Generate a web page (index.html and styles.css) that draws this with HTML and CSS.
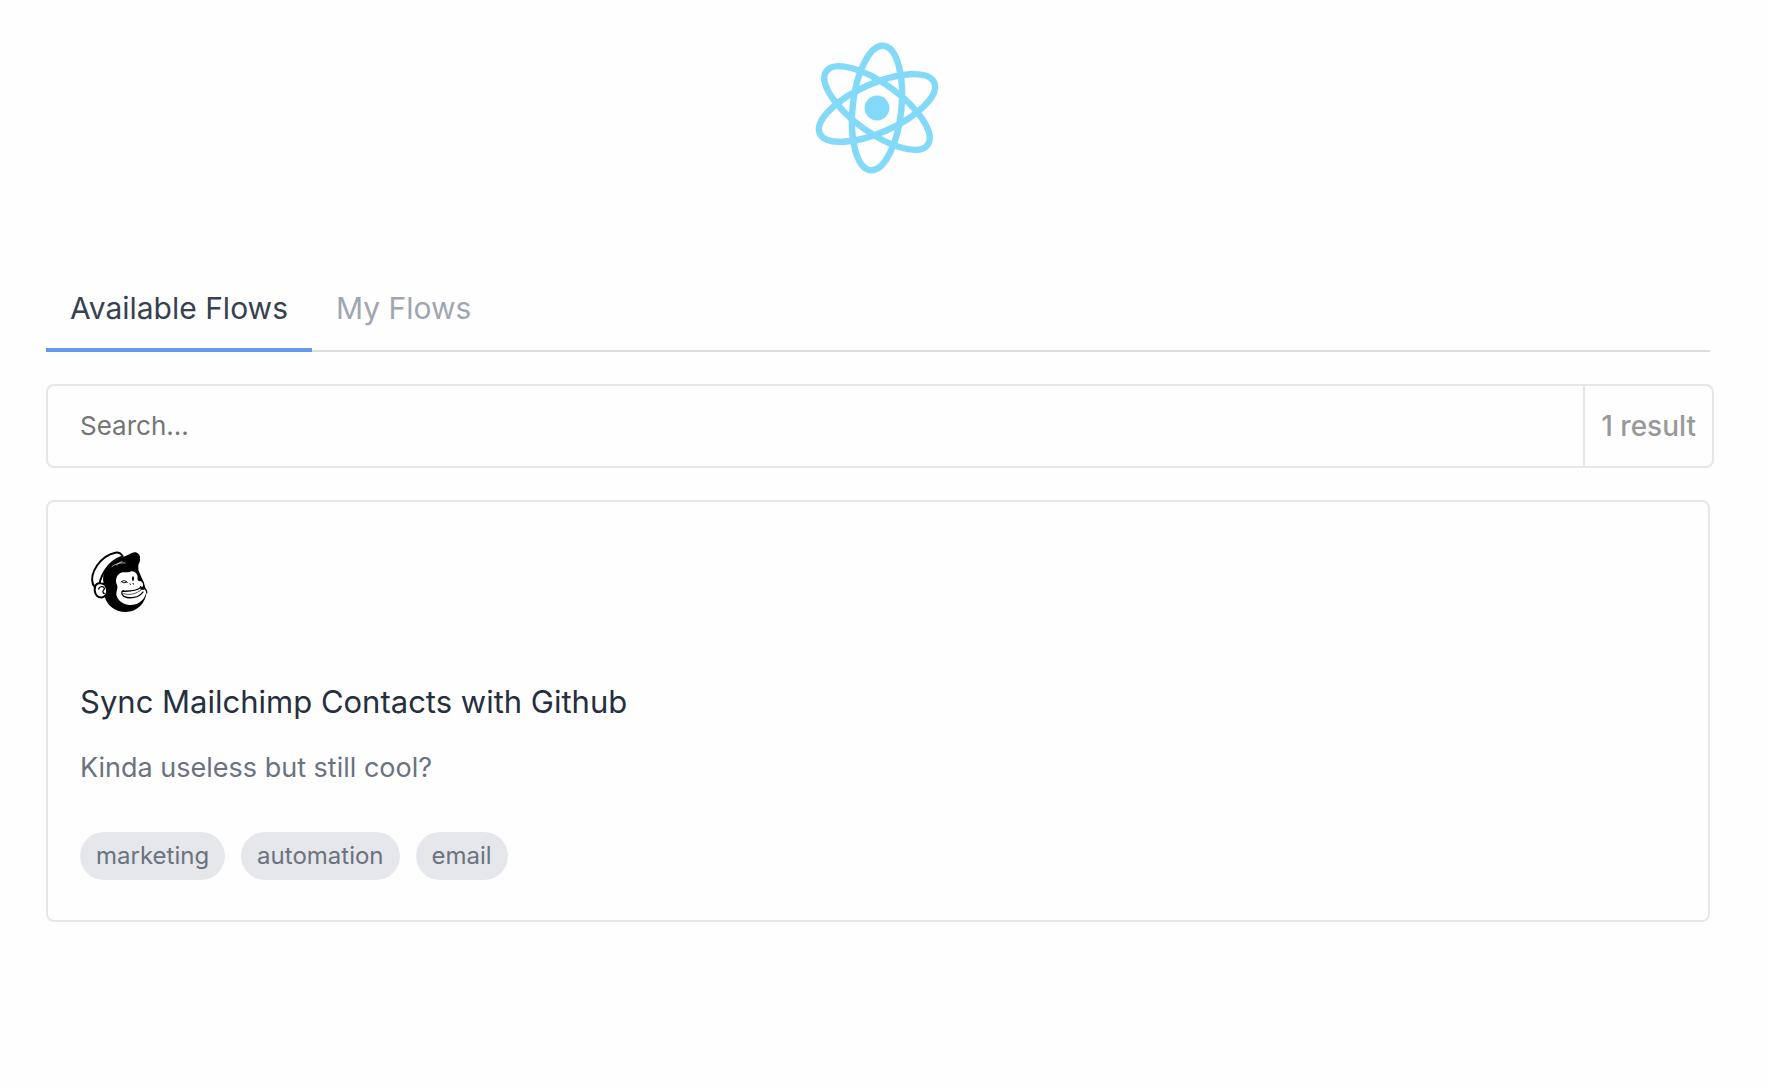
FILE: index.html
```html
<!DOCTYPE html>
<html lang="en">
<head>
<meta charset="utf-8">
<meta name="viewport" content="width=device-width, initial-scale=1">
<title>Available Flows</title>
<link rel="stylesheet" href="styles.css">
</head>
<body>
<header class="header">
  <svg class="atom" viewBox="-80 -80 160 160" role="img" aria-label="React">
    <circle r="12.4" fill="#82d9f8"/>
    <g fill="none" stroke="#82d9f8" stroke-width="6.4" transform="rotate(6)">
      <ellipse rx="24.4" ry="62.6"/>
      <ellipse rx="24.4" ry="62.6" transform="rotate(60)"/>
      <ellipse rx="24.4" ry="62.6" transform="rotate(120)"/>
    </g>
  </svg>
</header>
<main class="main">
  <nav class="tabs">
    <button class="tab tab-active" type="button">Available Flows</button>
    <button class="tab" type="button">My Flows</button>
  </nav>
  <div class="search">
    <input class="search-input" type="search" placeholder="Search..." aria-label="Search flows">
    <span class="search-count">1 result</span>
  </div>
  <article class="card">
    <svg class="card-logo" viewBox="1 -18 240 288" role="img" aria-label="Mailchimp">
      <path d="M80 88C70 100 68 118 73 134C84 148 82 164 75 170C82 196 108 216 138 216C172 215 198 190 201 155L190 122L176 90L176 70L120 60Z"/>
      <path fill="#fff" stroke="#000" stroke-width="6" stroke-linejoin="round" d="M40 134C28 100 62 47 107 38C117 36 125 42 129 49C106 57 88 72 77 90C67 106 61 118 60 130C52 130 47 137 45 140Z"/>
      <path d="M78 94C88 74 110 56 132 50C142 49 152 38 166 37C174 37 180 44 181 52C182 62 180 71 174 76C167 82 156 86 147 88C128 80 104 82 78 94Z"/>
      <path fill="none" stroke="#fff" stroke-width="2" stroke-linecap="round" d="M97 80C108 71 122 67 136 69M110 75C114 71 120 67 127 65"/>
      <path fill="#fff" stroke="#000" stroke-width="6" d="M64 130C52 127 44 137 45 151C46 166 56 174 68 172C78 170 84 160 82 149C80 138 74 131 64 130Z"/>
      <path fill="none" stroke="#000" stroke-width="4" stroke-linecap="round" d="M57 147C59 139 70 137 74 144C76 150 67 151 70 156C71 160 74 160 74 160"/>
      <path fill="#fff" d="M119 101C126 94 138 98 149 96C159 91 168 96 173 105C177 111 175 119 180 123C188 123 193 128 192 137L190 144C200 146 201 156 197 166C190 184 172 196 151 195C129 194 113 180 110 164C109 153 115 146 113 137C105 121 110 108 119 101Z"/>
      <path fill="none" stroke="#000" stroke-width="4" stroke-linecap="round" stroke-linejoin="round" d="M173 98C178 106 175 114 176 120C186 119 194 127 192 138C190 143 187 145 184 147C195 143 202 147 201 158M128 154C142 153 167 155 182 143M131 152C124 154 125 164 133 169C148 177 178 174 190 156M183 140L190 148"/>
      <path fill="none" stroke="#000" stroke-width="2" stroke-linecap="round" d="M132 161C151 167 170 161 184 150"/>
      <path fill="none" stroke="#000" stroke-width="3" stroke-linecap="round" d="M124 126C130 120 138 121 143 127M127 126C133 130 138 128 141 126M151 132L153 133M160 131L162 132"/>
      <ellipse cx="160" cy="116" rx="3" ry="7"/>
    </svg>
    <h2 class="card-title">Sync Mailchimp Contacts with Github</h2>
    <p class="card-text">Kinda useless but still cool?</p>
    <ul class="tags">
      <li class="tag">marketing</li>
      <li class="tag">automation</li>
      <li class="tag">email</li>
    </ul>
  </article>
</main>
</body>
</html>
```
FILE: styles.css
```css
* {
  box-sizing: border-box;
}

body {
  margin: 0;
  background: #fefefe;
  color: #252f3f;
  font-family: Inter, "Liberation Sans", sans-serif;
}

.header {
  display: flex;
  justify-content: center;
  padding: 28px 58px 76px 44px;
}

.atom {
  width: 160px;
  height: 160px;
}

.main {
  padding: 0 58px 0 46px;
}

.tabs {
  display: flex;
  height: 88px;
  box-shadow: inset 0 -2px #dcdde2;
}

.tab {
  padding: 4px 24px 0;
  border: 0;
  border-bottom: 4px solid transparent;
  background: none;
  color: #9fa6b2;
  font: 400 30px/40px Inter, "Liberation Sans", sans-serif;
}

.tab-active {
  border-bottom-color: #6499ed;
  color: #374151;
}

.search {
  display: flex;
  height: 84px;
  margin: 32px -4px 32px 0;
  border: 2px solid #e5e7eb;
  border-radius: 8px;
}

.search-input {
  flex: 1;
  min-width: 0;
  padding: 0 32px;
  border: 0;
  background: none;
  color: #374151;
  font: 400 26px/40px Inter, "Liberation Sans", sans-serif;
}

.search-input::placeholder {
  color: #757575;
  opacity: 1;
}

.search-count {
  display: flex;
  align-items: center;
  padding: 0 16px;
  border-left: 2px solid #e5e7eb;
  color: #999;
  font-size: 28px;
  font-weight: 500;
}

.card {
  padding: 32px 32px 40px;
  border: 2px solid #e5e7eb;
  border-radius: 8px;
}

.card-logo {
  display: block;
  width: 80px;
  height: 96px;
}

.card-title {
  margin: 48px 0 22px;
  font-size: 31px;
  font-weight: 400;
  line-height: 48px;
}

.card-text {
  margin: 0 0 44px;
  color: #6b7280;
  font-size: 27px;
  line-height: 40px;
}

.tags {
  display: flex;
  gap: 16px;
  margin: 0;
  padding: 0;
  list-style: none;
}

.tag {
  padding: 0 16px;
  border-radius: 24px;
  background: #e5e7eb;
  color: #6b7280;
  font-size: 24px;
  line-height: 48px;
}
```
